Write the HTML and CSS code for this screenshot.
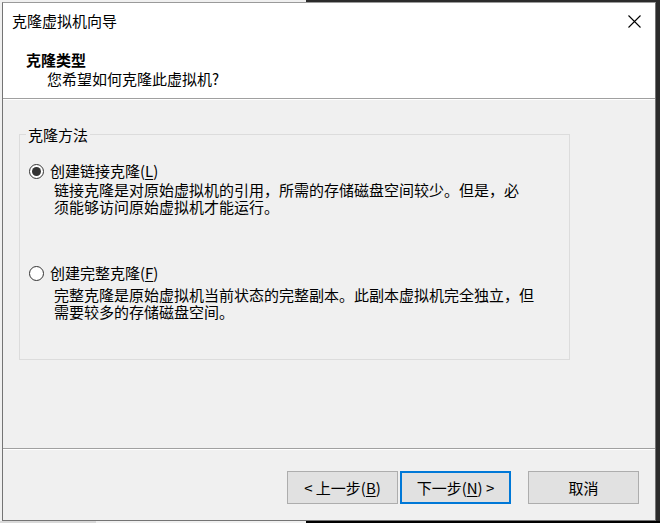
FILE: index.html
```html
<!DOCTYPE html>
<html lang="zh-CN">
<head>
<meta charset="utf-8">
<title>克隆虚拟机向导</title>
<link rel="stylesheet" href="styles.css">
</head>
<body>
<div class="desk-right"></div>
<div class="desk-strip"></div>
<div class="dialog">
  <header class="head">
    <div class="titlebar">
      <span class="title">克隆虚拟机向导</span>
      <svg class="close" width="13" height="13" viewBox="0 0 13 13"><path d="M0.5 0.5 L12.5 12.5 M12.5 0.5 L0.5 12.5" stroke="#000" stroke-width="1.1" fill="none"/></svg>
    </div>
    <div class="h1">克隆类型</div>
    <div class="h2">您希望如何克隆此虚拟机?</div>
  </header>
  <main class="content">
    <div class="group">
      <span class="legend">克隆方法</span>
      <div class="option"><span class="radio checked"></span><span class="label">创建链接克隆(<u>L</u>)</span></div>
      <div class="desc">链接克隆是对原始虚拟机的引用，所需的存储磁盘空间较少。但是，必<br>须能够访问原始虚拟机才能运行。</div>
      <div class="option second"><span class="radio"></span><span class="label">创建完整克隆(<u>F</u>)</span></div>
      <div class="desc desc2">完整克隆是原始虚拟机当前状态的完整副本。此副本虚拟机完全独立，但<br>需要较多的存储磁盘空间。</div>
    </div>
  </main>
  <footer class="foot">
    <button class="btn">&lt; 上一步(<u>B</u>)</button>
    <button class="btn primary">下一步(<u>N</u>) &gt;</button>
    <button class="btn cancel">取消</button>
  </footer>
</div>
</body>
</html>
```
FILE: styles.css
```css
html, body {
  margin: 0;
  padding: 0;
}
body {
  width: 660px;
  height: 523px;
  position: relative;
  overflow: hidden;
  background: #f0f0f0;
  font-family: "Noto Sans CJK SC", "Noto Sans", sans-serif;
  font-size: 15px;
  color: #000;
}
.desk-right {
  position: absolute;
  left: 306px;
  top: 0;
  right: 0;
  bottom: 0;
  background: #2b2b2b;
  border-bottom: 2px solid #000;
}
.desk-strip {
  position: absolute;
  left: 0;
  bottom: 0;
  width: 96px;
  height: 2px;
  background: #d9d9d9;
}
.dialog {
  position: absolute;
  left: 2px;
  top: 2px;
  width: 654px;
  height: 519px;
  box-sizing: border-box;
  border: 1px solid #747474;
  border-top-color: #9a9a9a;
  background: #f0f0f0;
  display: flex;
  flex-direction: column;
}
.head {
  height: 95px;
  flex: none;
  background: #fff;
  border-bottom: 1px solid #a0a0a0;
  box-shadow: 0 1px 0 #fff;
}
.titlebar {
  margin-top: 8px;
  height: 20px;
  padding-left: 9px;
  padding-right: 14px;
  display: flex;
  align-items: center;
  justify-content: space-between;
  line-height: 20px;
}
.close {
  display: block;
}
.h1 {
  margin-top: 19px;
  padding-left: 23px;
  line-height: 19px;
  font-weight: bold;
}
.h2 {
  padding-left: 44px;
  line-height: 19px;
}
.content {
  height: 349px;
  flex: none;
  box-sizing: border-box;
  padding: 35px 0 0 16px;
}
.group {
  position: relative;
  width: 551px;
  height: 226px;
  box-sizing: border-box;
  border: 1px solid #dcdcdc;
  padding: 27px 0 0 9px;
}
.legend {
  position: absolute;
  left: 6px;
  top: -9px;
  padding: 0 2px;
  line-height: 18px;
  background: #f0f0f0;
}
.option {
  display: flex;
  align-items: center;
  gap: 6px;
  line-height: 18px;
  height: 18px;
}
.option.second {
  margin-top: 49px;
}
.radio {
  width: 15px;
  height: 15px;
  box-sizing: border-box;
  border: 1px solid #333;
  border-radius: 50%;
  background: #fff;
  display: flex;
  align-items: center;
  justify-content: center;
  flex: none;
}
.radio.checked::after {
  content: "";
  width: 9px;
  height: 9px;
  border-radius: 50%;
  background: #333;
}
u {
  text-decoration: underline;
  text-underline-offset: 2px;
}
.desc {
  margin-top: 1px;
  margin-left: 25px;
  line-height: 17px;
}
.desc.desc2 {
  margin-top: 4px;
}
.foot {
  flex: 1;
  border-top: 1px solid #a0a0a0;
  box-shadow: inset 0 1px 0 #fff;
  display: flex;
  align-items: flex-start;
  justify-content: flex-end;
  padding: 22px 16px 0 0;
}
.btn {
  width: 111px;
  height: 33px;
  box-sizing: border-box;
  border: 1px solid #adadad;
  background: #e1e1e1;
  font-family: inherit;
  font-size: 15px;
  color: #000;
  padding: 0;
  line-height: 20px;
}
.btn.primary {
  margin-left: 2px;
  border: 2px solid #0078d7;
}
.btn.cancel {
  margin-left: 17px;
}
```
